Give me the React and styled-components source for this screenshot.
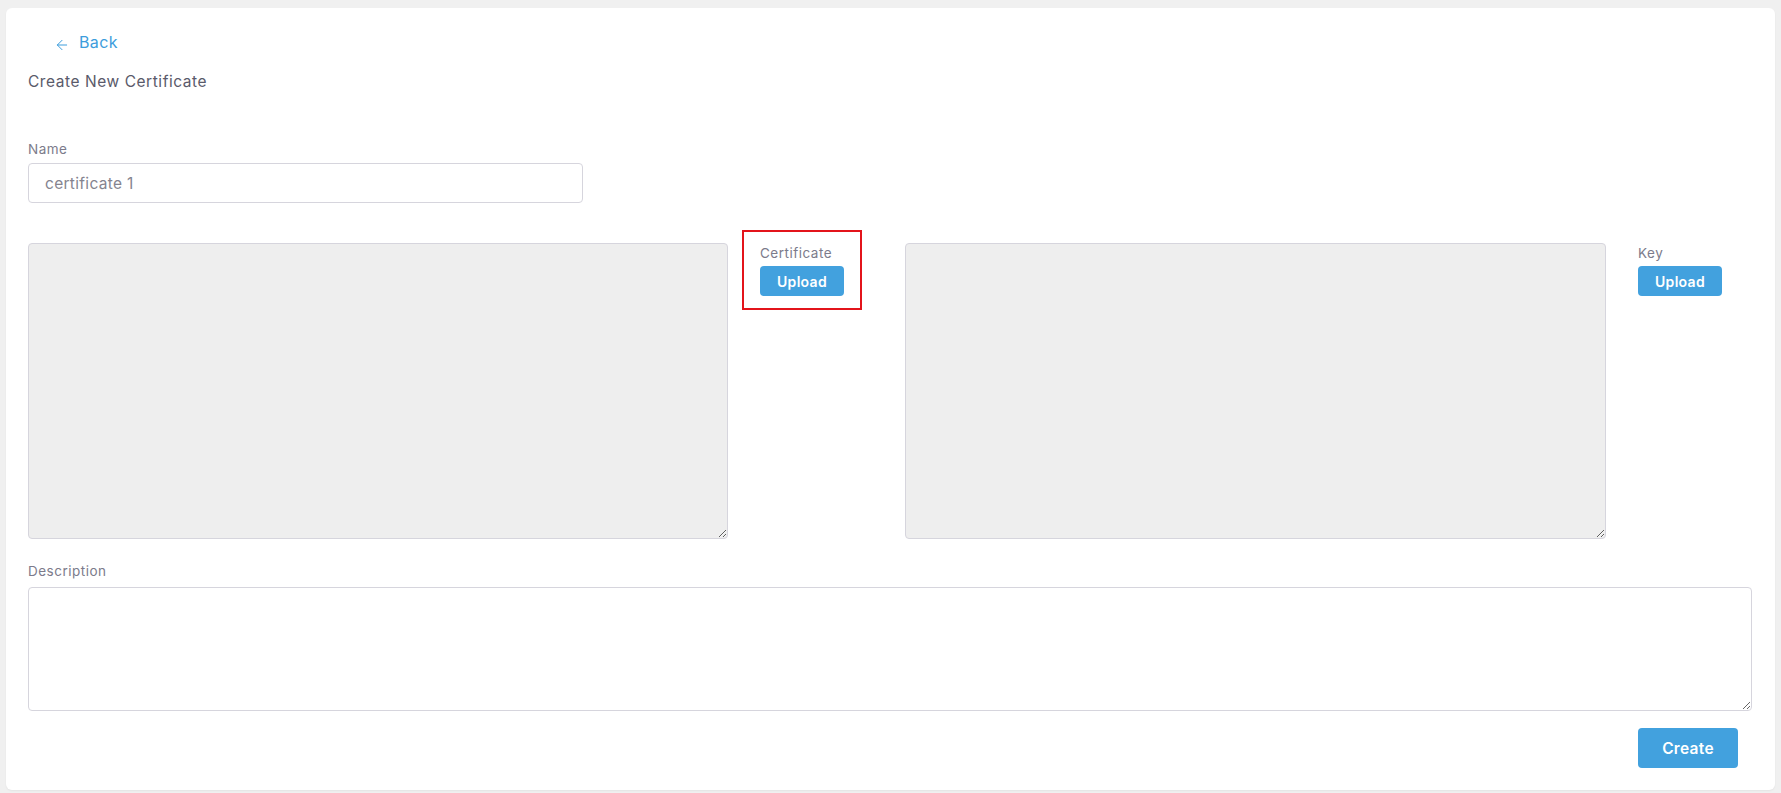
import React from 'react';
import styled, { createGlobalStyle } from 'styled-components';
import { ArrowLeft } from 'lucide-react';

const GlobalStyle = createGlobalStyle`
  body {
    margin: 0;
    background: #f0f0f0;
    font-family: Inter, "Noto Sans", "Liberation Sans", sans-serif;
  }
`;

const Page = styled.div`
  padding: 8px 6px 3px 6px;
`;

const Card = styled.div`
  background: #ffffff;
  border-radius: 6px;
  height: 782px;
  box-sizing: border-box;
  padding: 25px 23px 0 22px;
  box-shadow: 0 1px 2px rgba(0, 0, 0, 0.05);
`;

const BackLink = styled.a`
  display: inline-flex;
  align-items: center;
  gap: 9px;
  height: 18px;
  margin-left: 26px;
  color: #3d9ddc;
  font-size: 16px;
  letter-spacing: 0.4px;
  line-height: 18px;
  cursor: pointer;

  svg {
    transform: translateY(3px);
  }
`;

const Title = styled.h2`
  margin: 18px 0 0;
  font-size: 15.5px;
  letter-spacing: 0.55px;
  line-height: 20px;
  font-weight: 400;
  color: #5a5a6a;
`;

const Label = styled.div`
  font-size: 13.5px;
  letter-spacing: 0.5px;
  line-height: 16px;
  color: #7c7b8b;
  margin-top: ${(p) => p.$top || 0}px;
`;

const TextInput = styled.input`
  display: block;
  box-sizing: border-box;
  width: 555px;
  height: 40px;
  margin-top: 6px;
  padding: 0 16px;
  border: 1px solid #d6d5dd;
  border-radius: 4px;
  font-family: inherit;
  font-size: 15.5px;
  letter-spacing: 0.3px;
  color: #85848f;
  outline: none;
`;

const FileRow = styled.div`
  display: flex;
  margin-top: 40px;
  height: 296px;
`;

const Area = styled.textarea`
  display: block;
  box-sizing: border-box;
  width: ${(p) => p.$width}px;
  height: ${(p) => p.$height}px;
  background: ${(p) => (p.$filled ? '#eeeeee' : '#ffffff')};
  border: 1px solid #d6d5dd;
  border-radius: 4px;
  font-family: inherit;
  outline: none;
  margin: 0;
`;

const Side = styled.div`
  width: ${(p) => p.$width}px;
  padding-left: 14px;
  box-sizing: border-box;
`;

const Highlight = styled.div`
  width: 120px;
  box-sizing: border-box;
  margin-top: -13px;
  padding: 13px 16px 12px;
  border: 2px solid ${(p) => (p.$active ? '#e3141b' : 'transparent')};
`;

const Button = styled.button`
  display: block;
  border: none;
  border-radius: 4px;
  background: #42a1de;
  color: #ffffff;
  font-family: inherit;
  font-weight: 600;
  letter-spacing: 0.3px;
  cursor: pointer;
  width: ${(p) => (p.$big ? 100 : 84)}px;
  height: ${(p) => (p.$big ? 40 : 30)}px;
  font-size: ${(p) => (p.$big ? 15.5 : 14)}px;
  margin-top: ${(p) => p.$top || 0}px;
`;

const Footer = styled.div`
  display: flex;
  justify-content: flex-end;
  padding-right: 14px;
  margin-top: 17px;
`;

export default function App() {
  return (
    <Page>
      <GlobalStyle />
      <Card>
        <BackLink>
          <ArrowLeft size={16} strokeWidth={1.5} />
          Back
        </BackLink>
        <Title>Create New Certificate</Title>

        <Label $top={49}>Name</Label>
        <TextInput defaultValue="certificate 1" />

        <FileRow>
          <Area $filled $width={700} $height={296} />
          <Side $width={177}>
            <Highlight $active>
              <Label>Certificate</Label>
              <Button $top={5}>Upload</Button>
            </Highlight>
          </Side>
          <Area $filled $width={701} $height={296} />
          <Side $width={146}>
            <Highlight>
              <Label>Key</Label>
              <Button $top={5}>Upload</Button>
            </Highlight>
          </Side>
        </FileRow>

        <Label $top={24}>Description</Label>
        <Area $width={1724} $height={124} style={{ marginTop: 8 }} />

        <Footer>
          <Button $big>Create</Button>
        </Footer>
      </Card>
    </Page>
  );
}
